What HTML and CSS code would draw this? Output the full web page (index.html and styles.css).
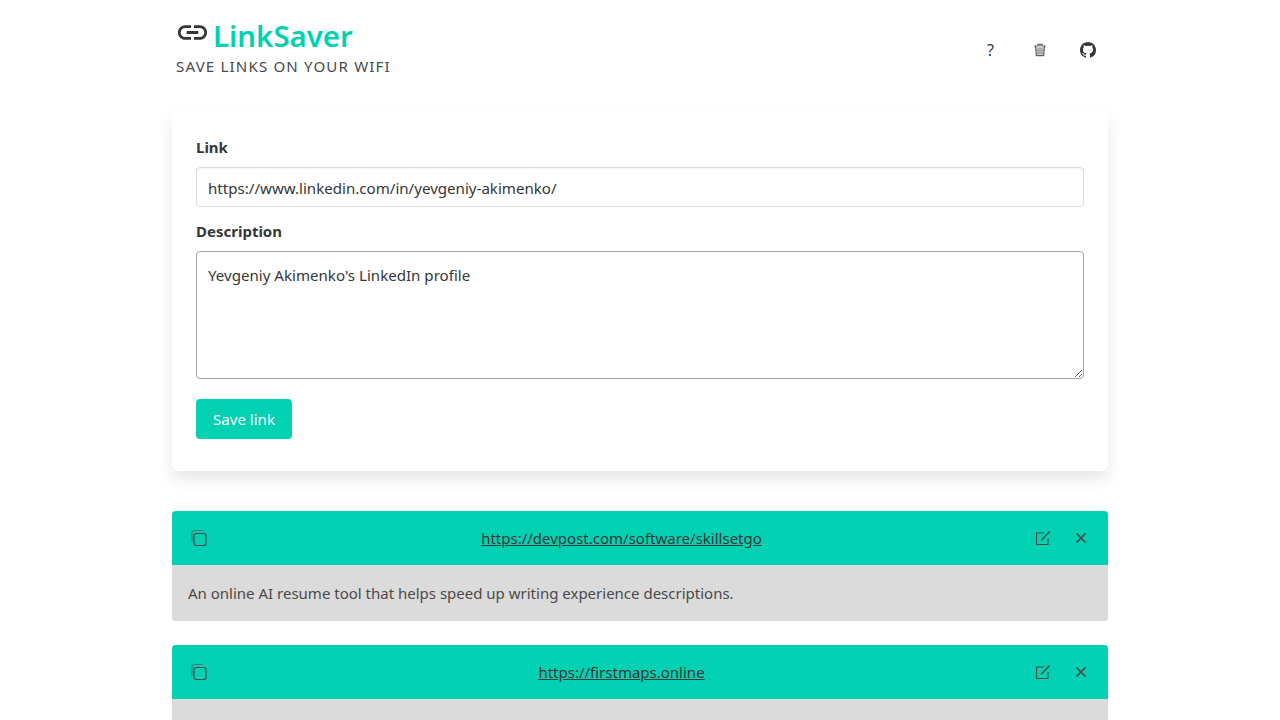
FILE: index.html
```html
<!DOCTYPE html>
<html lang="en">
<head>
<meta charset="utf-8">
<title>LinkSaver</title>
<link rel="stylesheet" href="styles.css">
</head>
<body>
<div class="container">
  <header class="header">
    <div class="brand">
      <h1 class="title">
        <svg class="logo" viewBox="0 0 24 24" width="35" height="35" fill="#363636"><path d="M3.9 12c0-1.71 1.39-3.1 3.1-3.1h4V7H7c-2.76 0-5 2.24-5 5s2.24 5 5 5h4v-1.9H7c-1.71 0-3.1-1.39-3.1-3.1zM8 13h8v-2H8v2zm9-6h-4v1.9h4c1.71 0 3.1 1.39 3.1 3.1s-1.39 3.1-3.1 3.1h-4V17h4c2.76 0 5-2.24 5-5s-2.24-5-5-5z"/></svg>
        <span>LinkSaver</span>
      </h1>
      <p class="subtitle">SAVE LINKS ON YOUR WIFI</p>
    </div>
    <nav class="actions">
      <span class="action help">?</span>
      <span class="action">
        <svg viewBox="0 0 16 16" width="14" height="16" fill="none" stroke="#363636"><path d="M1.5 3.5h13" stroke-width="1.1"/><path d="M5.5 3V1.5h5V3" stroke-width="1.1"/><path d="M3 3.5l.8 11h8.4l.8-11" stroke-width="1.1" fill="#ccc"/><path d="M6 6v6.5M8 6v6.5M10 6v6.5" stroke-width=".8" stroke="#777"/></svg>
      </span>
      <span class="action">
        <svg viewBox="0 0 16 16" width="16" height="16" fill="#363636"><path d="M8 0C3.58 0 0 3.58 0 8c0 3.54 2.29 6.53 5.47 7.59.4.07.55-.17.55-.38 0-.19-.01-.82-.01-1.49-2.01.37-2.53-.49-2.69-.94-.09-.23-.48-.94-.82-1.13-.28-.15-.68-.52-.01-.53.63-.01 1.08.58 1.23.82.72 1.21 1.87.87 2.33.66.07-.52.28-.87.51-1.07-1.78-.2-3.64-.89-3.64-3.95 0-.87.31-1.59.82-2.15-.08-.2-.36-1.02.08-2.12 0 0 .67-.21 2.2.82.64-.18 1.32-.27 2-.27s1.36.09 2 .27c1.53-1.04 2.2-.82 2.2-.82.44 1.1.16 1.92.08 2.12.51.56.82 1.27.82 2.15 0 3.07-1.87 3.75-3.65 3.95.29.25.54.73.54 1.48 0 1.07-.01 1.93-.01 2.2 0 .21.15.46.55.38A8.01 8.01 0 0 0 16 8c0-4.42-3.58-8-8-8z"/></svg>
      </span>
    </nav>
  </header>

  <form class="box">
    <div class="field">
      <label class="label" for="link">Link</label>
      <input class="input" id="link" type="text" value="https://www.linkedin.com/in/yevgeniy-akimenko/">
    </div>
    <div class="field">
      <label class="label" for="description">Description</label>
      <textarea class="textarea" id="description">Yevgeniy Akimenko's LinkedIn profile</textarea>
    </div>
    <button class="button" type="button">Save link</button>
  </form>

  <section class="links">
    <article class="message">
      <div class="message-header">
        <svg class="icon-copy" viewBox="0 0 18 18" width="18" height="18" fill="none" stroke="#4a4a4a" stroke-width="1.2"><rect x="4" y="4.5" width="12" height="12" rx="2.2"/><path d="M2 13V4a2.5 2.5 0 0 1 2.5-2.5H13" stroke="#3a7f78"/></svg>
        <a class="message-link" href="#">https://devpost.com/software/skillsetgo</a>
        <svg class="icon-edit" viewBox="0 0 16 16" width="16" height="16" fill="none" stroke="#4a4a4a" stroke-width="1.1"><path d="M13 8v6.5H1.5V3H9"/><path d="M6 10.5L14.8 1.2" stroke-width="1.3"/></svg>
        <svg class="icon-close" viewBox="0 0 12 12" width="12" height="12" fill="none" stroke="#4a4a4a" stroke-width="1.7"><path d="M1.5 1.5l9 9M10.5 1.5l-9 9"/></svg>
      </div>
      <div class="message-body">An online AI resume tool that helps speed up writing experience descriptions.</div>
    </article>
    <article class="message">
      <div class="message-header">
        <svg class="icon-copy" viewBox="0 0 18 18" width="18" height="18" fill="none" stroke="#4a4a4a" stroke-width="1.2"><rect x="4" y="4.5" width="12" height="12" rx="2.2"/><path d="M2 13V4a2.5 2.5 0 0 1 2.5-2.5H13" stroke="#3a7f78"/></svg>
        <a class="message-link" href="#">https://firstmaps.online</a>
        <svg class="icon-edit" viewBox="0 0 16 16" width="16" height="16" fill="none" stroke="#4a4a4a" stroke-width="1.1"><path d="M13 8v6.5H1.5V3H9"/><path d="M6 10.5L14.8 1.2" stroke-width="1.3"/></svg>
        <svg class="icon-close" viewBox="0 0 12 12" width="12" height="12" fill="none" stroke="#4a4a4a" stroke-width="1.7"><path d="M1.5 1.5l9 9M10.5 1.5l-9 9"/></svg>
      </div>
      <div class="message-body"></div>
    </article>
  </section>
</div>
</body>
</html>
```
FILE: styles.css
```css
* { box-sizing: border-box; }
html, body { margin: 0; padding: 0; background: #fff; }
html { overflow: hidden; height: 720px; }
body {
  font-family: "Noto Sans", "Open Sans", sans-serif;
  font-size: 15.1px;
  line-height: 24px;
  color: #4a4a4a;
}
.container { width: 936px; margin: 0 auto; }
.header {
  height: 111px;
  display: flex;
  justify-content: space-between;
  align-items: flex-start;
}
.brand { padding: 16px 0 0 4px; }
.title {
  margin: 0;
  display: flex;
  align-items: center;
  gap: 3px;
  font-size: 29.4px;
  line-height: 40px;
  font-weight: 600;
  color: #00d1b2;
}
.logo { margin: -8px 0 0 -1px; }
.subtitle {
  margin: 0;
  font-size: 15.1px;
  line-height: 20px;
  letter-spacing: 1.15px;
  color: #4a4a4a;
}
.actions {
  display: flex;
  padding-top: 38px;
  padding-right: 12px;
}
.action {
  width: 16px;
  height: 24px;
  margin-left: 33px;
  display: flex;
  align-items: center;
  justify-content: center;
  color: #363636;
}
.help { font-size: 16px; padding-left: 1px; }
.action svg { margin-left: 1px; }
.action:last-child svg { margin-left: 0; }
.box {
  height: 360px;
  padding: 24px;
  background: #fff;
  border-radius: 6px;
  box-shadow: 0 8px 16px rgba(10, 10, 10, .1), 0 0 1px rgba(10, 10, 10, .02);
}
.field { margin-bottom: 12px; }
.label {
  display: block;
  margin-bottom: 8px;
  font-weight: 700;
  color: #363636;
  font-size: 15px;
}
.input, .textarea {
  display: block;
  width: 100%;
  font: inherit;
  color: #363636;
  background: #fff;
  border-radius: 4px;
  padding: 7px 11px;
  outline: 0;
}
.input {
  height: 40px;
  padding-top: 8px;
  padding-bottom: 6px;
  border: 1px solid #dbdbdb;
  box-shadow: inset 0 1px 2px rgba(10, 10, 10, .05);
}
.textarea {
  height: 128px;
  padding-top: 11px;
  border: 1px solid #a5a5a5;
  box-shadow: none;
  resize: vertical;
}
.button {
  display: block;
  width: 96px;
  height: 40px;
  margin-top: 20px;
  padding: 0;
  border: 0;
  border-radius: 4px;
  background: #00d1b2;
  color: #fff;
  font: inherit;
}
.links { margin-top: 40px; }
.message { margin-bottom: 24px; border-radius: 4px; background: #dbdbdb; font-size: 15px; }
.message-header {
  height: 54px;
  display: flex;
  align-items: center;
  padding: 0 21px 0 18px;
  background: #00d1b2;
  border-radius: 4px 4px 0 0;
}
.message-link {
  flex: 1;
  text-align: center;
  color: #363636;
  text-decoration: underline;
}
.icon-edit { margin-right: 24px; }
.message-body { height: 56px; padding: 16px; }
```
